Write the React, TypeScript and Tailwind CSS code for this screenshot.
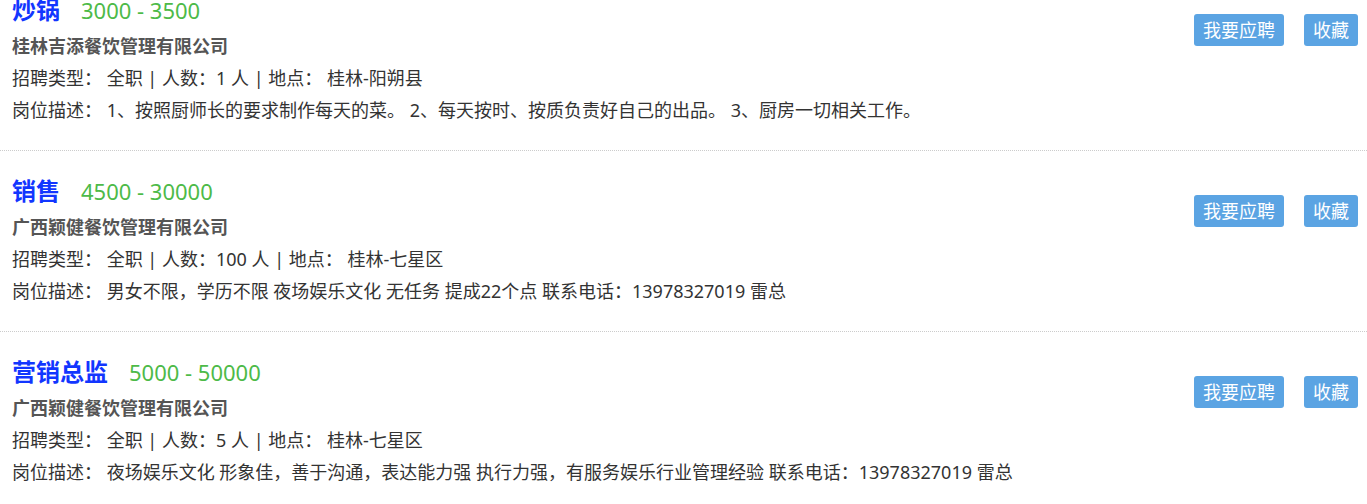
const jobs = [
  {
    id: 1,
    title: '炒锅',
    salary: '3000 - 3500',
    company: '桂林吉添餐饮管理有限公司',
    headcount: '1',
    location: '桂林-阳朔县',
    desc: '1、按照厨师长的要求制作每天的菜。 2、每天按时、按质负责好自己的出品。 3、厨房一切相关工作。',
  },
  {
    id: 2,
    title: '销售',
    salary: '4500 - 30000',
    company: '广西颖健餐饮管理有限公司',
    headcount: '100',
    location: '桂林-七星区',
    desc: '男女不限，学历不限 夜场娱乐文化 无任务 提成22个点 联系电话：13978327019 雷总',
  },
  {
    id: 3,
    title: '营销总监',
    salary: '5000 - 50000',
    company: '广西颖健餐饮管理有限公司',
    headcount: '5',
    location: '桂林-七星区',
    desc: '夜场娱乐文化 形象佳，善于沟通，表达能力强 执行力强，有服务娱乐行业管理经验 联系电话：13978327019 雷总',
  },
];

type Job = (typeof jobs)[number];

function JobRow({ job }: { job: Job }) {
  return (
    <div className="flex justify-between border-b border-dotted border-[#cccccc] pl-3 pr-[9px] pt-5 pb-6">
      <div>
        <div className="flex items-center h-10">
          <span className="text-[24px] font-bold text-[#1236ff]">{job.title}</span>
          <span className="ml-[21px] text-[22px] text-[#4dba48]">{job.salary}</span>
        </div>
        <div className="h-8 leading-8 text-[18px] font-bold text-[#555555]">{job.company}</div>
        <div className="h-8 leading-8 text-[18px] text-[#333333] whitespace-pre">
          招聘类型： 全职 | 人数：{job.headcount} 人 | 地点： {job.location}
        </div>
        <div className="h-8 leading-8 text-[18px] text-[#333333] whitespace-pre">
          岗位描述： {job.desc}
        </div>
      </div>
      <div className="flex gap-5 pt-6 items-start">
        <button className="h-8 rounded-[3px] bg-[#5ba4e3] px-[9px] text-[18px] leading-8 text-white">
          我要应聘
        </button>
        <button className="h-8 rounded-[3px] bg-[#5ba4e3] px-[9px] text-[18px] leading-8 text-white">
          收藏
        </button>
      </div>
    </div>
  );
}

export default function App() {
  return (
    <div
      className="min-h-screen overflow-hidden bg-white"
      style={{ fontFamily: '"Noto Sans", "Noto Sans CJK SC", sans-serif' }}
    >
      <div className="-mt-[30px]">
        {jobs.map((job) => (
          <JobRow key={job.id} job={job} />
        ))}
      </div>
    </div>
  );
}
